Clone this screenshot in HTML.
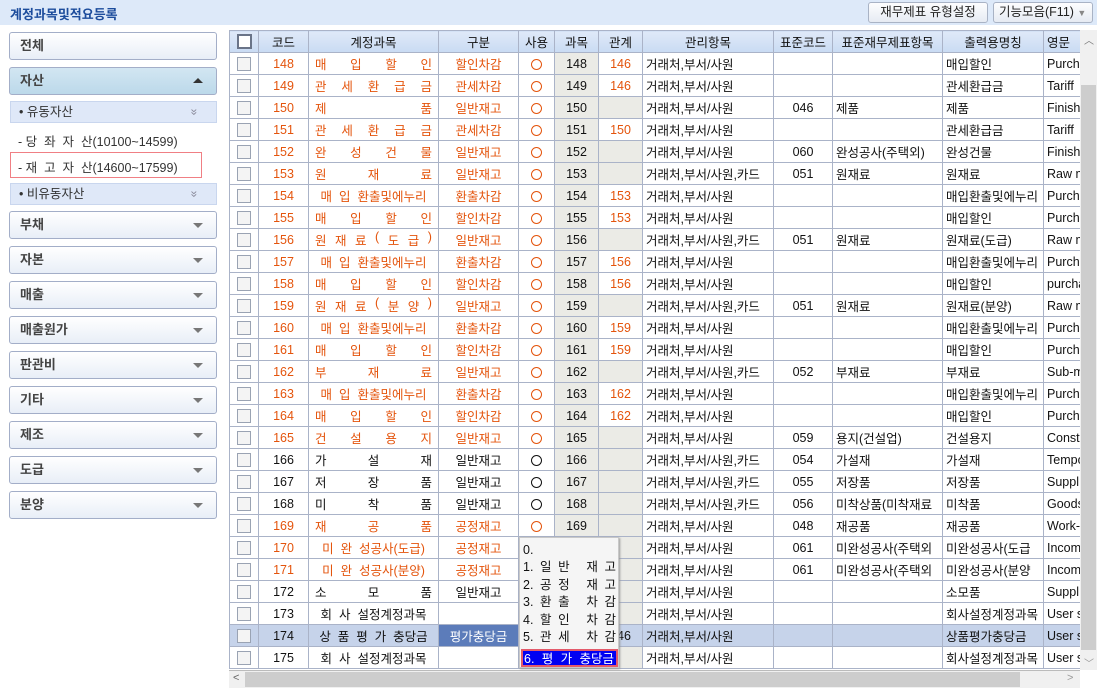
<!DOCTYPE html>
<html><head><meta charset="utf-8">
<style>
*{box-sizing:border-box;margin:0;padding:0}
body{width:1097px;height:693px;background:#fff;font-family:"Liberation Sans","Noto Sans CJK KR",sans-serif;font-size:12px;color:#111;position:relative;overflow:hidden}
.top{position:absolute;left:0;top:0;width:1097px;height:25px;background:#dde9f9}
.title{position:absolute;left:10px;top:4px;font-size:13px;font-weight:bold;color:#1c4c9c}
.tbtn{position:absolute;top:2px;height:21px;border:1px solid #a9b3c5;border-radius:3px;background:linear-gradient(#fdfdfe,#e6ebf3);font-size:12.5px;line-height:19px;text-align:center;color:#222}
.sb{position:absolute;left:9px;width:208px;height:28px;border:1px solid #a3aec8;border-radius:3px;background:linear-gradient(#fff,#e8eef7);font-weight:bold;font-size:13px;color:#444;padding-left:10px;line-height:26px}
.sb .ar{position:absolute;right:13px;top:11px;width:0;height:0;border-left:5px solid transparent;border-right:5px solid transparent;border-top:5px solid #777}
.sub{position:absolute;left:10px;width:207px;height:22px;background:#dfe8f8;border:1px solid #c9d6ee;color:#333;padding-left:8px;line-height:20px;font-size:12.5px}
.sub .dd{position:absolute;right:18px;top:0;color:#889;font-size:12px;transform:rotate(90deg)}
.lf{position:absolute;left:18px;font-size:12.5px;color:#333}
table{position:absolute;left:229px;top:30px;border-collapse:collapse;table-layout:fixed;width:851px}
td,th{border:1px solid #aab3c8;height:22px;padding:0 3px;white-space:nowrap;overflow:hidden;font-weight:normal;font-size:12.5px}
th{background:linear-gradient(#dfe9f8,#c9dbf3);text-align:center;color:#111}
td{text-align:center}
td.l{text-align:left}
.o td.c,.o td.n,.o td.g{color:#e4540c}
td.g{background:#ebebe6}
td.n{padding:0 6px}
.j{display:flex;justify-content:space-between}
.cb{display:inline-block;width:14px;height:14px;border:1px solid #9aa3b3;background:#f4f4f4;vertical-align:middle}
.hcb{display:inline-block;width:15px;height:15px;border:2px solid #6a7488;background:#fff;vertical-align:middle}
.ci{display:inline-block;width:11px;height:11px;border:1px solid #111;border-radius:50%;vertical-align:middle}
.o .ci{border-color:#e4540c}
tr.sel td{background:#c6d3ea}
tr.sel td.gb{background:#5c7cba;color:#fff}
.vs{position:absolute;left:1080px;top:30px;width:17px;height:640px;background:#f0f0f0}
.hs{position:absolute;left:229px;top:670px;width:851px;height:18px;background:#f0f0f0;border-top:1px solid #bbb}
.menu{position:absolute;left:519px;top:537px;width:100px;height:131px;background:#f5f5f5;border:1px solid #c8c8c8;box-shadow:1px 1px 2px #999;font-size:12.5px;padding-left:3px}
.mi{height:17.4px;line-height:17px;display:flex;justify-content:space-between;padding-right:2px}
.mi.h{background:#0000f2;color:#fff;border:2px solid #e35a6a;margin-left:-2px;margin-top:3px;padding-left:1px}
</style></head><body>
<div class="top"><div class="title">계정과목및적요등록</div>
<div class="tbtn" style="left:868px;width:120px">재무제표 유형설정</div>
<div class="tbtn" style="left:993px;width:100px;text-align:left;padding-left:5px">기능모음(F11) <span style="color:#888;font-size:9px">▼</span></div></div>

<div class="sb" style="top:32px">전체</div>
<div class="sb" style="top:67px;background:linear-gradient(#d2e6f2,#bcd9ea)">자산<span class="ar" style="border-top:0;border-bottom:5px solid #333;top:10px"></span></div>
<div class="sub" style="top:101px">• 유동자산<span class="dd">»</span></div>
<div class="lf" style="top:131px">- 당 &nbsp;좌 &nbsp;자 &nbsp;산(10100~14599)</div>
<div style="position:absolute;left:10px;top:152px;width:192px;height:26px;border:1px solid #f07f84"></div>
<div class="lf" style="top:157px">- 재 &nbsp;고 &nbsp;자 &nbsp;산(14600~17599)</div>
<div class="sub" style="top:183px">• 비유동자산<span class="dd">»</span></div>
<div class="sb" style="top:211px">부채<span class="ar"></span></div>
<div class="sb" style="top:246px">자본<span class="ar"></span></div>
<div class="sb" style="top:281px">매출<span class="ar"></span></div>
<div class="sb" style="top:316px">매출원가<span class="ar"></span></div>
<div class="sb" style="top:351px">판관비<span class="ar"></span></div>
<div class="sb" style="top:386px">기타<span class="ar"></span></div>
<div class="sb" style="top:421px">제조<span class="ar"></span></div>
<div class="sb" style="top:456px">도급<span class="ar"></span></div>
<div class="sb" style="top:491px">분양<span class="ar"></span></div>

<table>
<colgroup><col style="width:29px"><col style="width:50px"><col style="width:130px"><col style="width:80px"><col style="width:36px"><col style="width:44px"><col style="width:44px"><col style="width:131px"><col style="width:59px"><col style="width:110px"><col style="width:101px"><col style="width:37px"></colgroup>
<tr><th><span class="hcb"></span></th><th>코드</th><th>계정과목</th><th>구분</th><th>사용</th><th>과목</th><th>관계</th><th>관리항목</th><th>표준코드</th><th>표준재무제표항목</th><th>출력용명칭</th><th style="text-align:left">영문</th></tr>
<tr class="o"><td><span class="cb"></span></td><td class="c">148</td><td class="n"><div class="j"><span>매</span><span>입</span><span>할</span><span>인</span></div></td><td class="c">할인차감</td><td><span class="ci"></span></td><td class="g" style="color:#111">148</td><td class="c">146</td><td class="l">거래처,부서/사원</td><td></td><td></td><td class="l">매입할인</td><td class="l">Purchase</td></tr>
<tr class="o"><td><span class="cb"></span></td><td class="c">149</td><td class="n"><div class="j"><span>관</span><span>세</span><span>환</span><span>급</span><span>금</span></div></td><td class="c">관세차감</td><td><span class="ci"></span></td><td class="g" style="color:#111">149</td><td class="c">146</td><td class="l">거래처,부서/사원</td><td></td><td></td><td class="l">관세환급금</td><td class="l">Tariff</td></tr>
<tr class="o"><td><span class="cb"></span></td><td class="c">150</td><td class="n"><div class="j"><span>제</span><span>품</span></div></td><td class="c">일반재고</td><td><span class="ci"></span></td><td class="g" style="color:#111">150</td><td class="g"></td><td class="l">거래처,부서/사원</td><td>046</td><td class="l">제품</td><td class="l">제품</td><td class="l">Finish</td></tr>
<tr class="o"><td><span class="cb"></span></td><td class="c">151</td><td class="n"><div class="j"><span>관</span><span>세</span><span>환</span><span>급</span><span>금</span></div></td><td class="c">관세차감</td><td><span class="ci"></span></td><td class="g" style="color:#111">151</td><td class="c">150</td><td class="l">거래처,부서/사원</td><td></td><td></td><td class="l">관세환급금</td><td class="l">Tariff</td></tr>
<tr class="o"><td><span class="cb"></span></td><td class="c">152</td><td class="n"><div class="j"><span>완</span><span>성</span><span>건</span><span>물</span></div></td><td class="c">일반재고</td><td><span class="ci"></span></td><td class="g" style="color:#111">152</td><td class="g"></td><td class="l">거래처,부서/사원</td><td>060</td><td class="l">완성공사(주택외)</td><td class="l">완성건물</td><td class="l">Finish</td></tr>
<tr class="o"><td><span class="cb"></span></td><td class="c">153</td><td class="n"><div class="j"><span>원</span><span>재</span><span>료</span></div></td><td class="c">일반재고</td><td><span class="ci"></span></td><td class="g" style="color:#111">153</td><td class="g"></td><td class="l">거래처,부서/사원,카드</td><td>051</td><td class="l">원재료</td><td class="l">원재료</td><td class="l">Raw ma</td></tr>
<tr class="o"><td><span class="cb"></span></td><td class="c">154</td><td class="n">매 &nbsp;입 &nbsp;환출및에누리</td><td class="c">환출차감</td><td><span class="ci"></span></td><td class="g" style="color:#111">154</td><td class="c">153</td><td class="l">거래처,부서/사원</td><td></td><td></td><td class="l">매입환출및에누리</td><td class="l">Purchase</td></tr>
<tr class="o"><td><span class="cb"></span></td><td class="c">155</td><td class="n"><div class="j"><span>매</span><span>입</span><span>할</span><span>인</span></div></td><td class="c">할인차감</td><td><span class="ci"></span></td><td class="g" style="color:#111">155</td><td class="c">153</td><td class="l">거래처,부서/사원</td><td></td><td></td><td class="l">매입할인</td><td class="l">Purchase</td></tr>
<tr class="o"><td><span class="cb"></span></td><td class="c">156</td><td class="n"><div class="j"><span>원</span><span>재</span><span>료</span><span>(</span><span>도</span><span>급</span><span>)</span></div></td><td class="c">일반재고</td><td><span class="ci"></span></td><td class="g" style="color:#111">156</td><td class="g"></td><td class="l">거래처,부서/사원,카드</td><td>051</td><td class="l">원재료</td><td class="l">원재료(도급)</td><td class="l">Raw ma</td></tr>
<tr class="o"><td><span class="cb"></span></td><td class="c">157</td><td class="n">매 &nbsp;입 &nbsp;환출및에누리</td><td class="c">환출차감</td><td><span class="ci"></span></td><td class="g" style="color:#111">157</td><td class="c">156</td><td class="l">거래처,부서/사원</td><td></td><td></td><td class="l">매입환출및에누리</td><td class="l">Purchase</td></tr>
<tr class="o"><td><span class="cb"></span></td><td class="c">158</td><td class="n"><div class="j"><span>매</span><span>입</span><span>할</span><span>인</span></div></td><td class="c">할인차감</td><td><span class="ci"></span></td><td class="g" style="color:#111">158</td><td class="c">156</td><td class="l">거래처,부서/사원</td><td></td><td></td><td class="l">매입할인</td><td class="l">purchase</td></tr>
<tr class="o"><td><span class="cb"></span></td><td class="c">159</td><td class="n"><div class="j"><span>원</span><span>재</span><span>료</span><span>(</span><span>분</span><span>양</span><span>)</span></div></td><td class="c">일반재고</td><td><span class="ci"></span></td><td class="g" style="color:#111">159</td><td class="g"></td><td class="l">거래처,부서/사원,카드</td><td>051</td><td class="l">원재료</td><td class="l">원재료(분양)</td><td class="l">Raw ma</td></tr>
<tr class="o"><td><span class="cb"></span></td><td class="c">160</td><td class="n">매 &nbsp;입 &nbsp;환출및에누리</td><td class="c">환출차감</td><td><span class="ci"></span></td><td class="g" style="color:#111">160</td><td class="c">159</td><td class="l">거래처,부서/사원</td><td></td><td></td><td class="l">매입환출및에누리</td><td class="l">Purchase</td></tr>
<tr class="o"><td><span class="cb"></span></td><td class="c">161</td><td class="n"><div class="j"><span>매</span><span>입</span><span>할</span><span>인</span></div></td><td class="c">할인차감</td><td><span class="ci"></span></td><td class="g" style="color:#111">161</td><td class="c">159</td><td class="l">거래처,부서/사원</td><td></td><td></td><td class="l">매입할인</td><td class="l">Purchase</td></tr>
<tr class="o"><td><span class="cb"></span></td><td class="c">162</td><td class="n"><div class="j"><span>부</span><span>재</span><span>료</span></div></td><td class="c">일반재고</td><td><span class="ci"></span></td><td class="g" style="color:#111">162</td><td class="g"></td><td class="l">거래처,부서/사원,카드</td><td>052</td><td class="l">부재료</td><td class="l">부재료</td><td class="l">Sub-ma</td></tr>
<tr class="o"><td><span class="cb"></span></td><td class="c">163</td><td class="n">매 &nbsp;입 &nbsp;환출및에누리</td><td class="c">환출차감</td><td><span class="ci"></span></td><td class="g" style="color:#111">163</td><td class="c">162</td><td class="l">거래처,부서/사원</td><td></td><td></td><td class="l">매입환출및에누리</td><td class="l">Purchase</td></tr>
<tr class="o"><td><span class="cb"></span></td><td class="c">164</td><td class="n"><div class="j"><span>매</span><span>입</span><span>할</span><span>인</span></div></td><td class="c">할인차감</td><td><span class="ci"></span></td><td class="g" style="color:#111">164</td><td class="c">162</td><td class="l">거래처,부서/사원</td><td></td><td></td><td class="l">매입할인</td><td class="l">Purchase</td></tr>
<tr class="o"><td><span class="cb"></span></td><td class="c">165</td><td class="n"><div class="j"><span>건</span><span>설</span><span>용</span><span>지</span></div></td><td class="c">일반재고</td><td><span class="ci"></span></td><td class="g" style="color:#111">165</td><td class="g"></td><td class="l">거래처,부서/사원</td><td>059</td><td class="l">용지(건설업)</td><td class="l">건설용지</td><td class="l">Const</td></tr>
<tr><td><span class="cb"></span></td><td>166</td><td class="n"><div class="j"><span>가</span><span>설</span><span>재</span></div></td><td>일반재고</td><td><span class="ci"></span></td><td class="g">166</td><td class="g"></td><td class="l">거래처,부서/사원,카드</td><td>054</td><td class="l">가설재</td><td class="l">가설재</td><td class="l">Tempo</td></tr>
<tr><td><span class="cb"></span></td><td>167</td><td class="n"><div class="j"><span>저</span><span>장</span><span>품</span></div></td><td>일반재고</td><td><span class="ci"></span></td><td class="g">167</td><td class="g"></td><td class="l">거래처,부서/사원,카드</td><td>055</td><td class="l">저장품</td><td class="l">저장품</td><td class="l">Suppl</td></tr>
<tr><td><span class="cb"></span></td><td>168</td><td class="n"><div class="j"><span>미</span><span>착</span><span>품</span></div></td><td>일반재고</td><td><span class="ci"></span></td><td class="g">168</td><td class="g"></td><td class="l">거래처,부서/사원,카드</td><td>056</td><td class="l">미착상품(미착재료</td><td class="l">미착품</td><td class="l">Goods</td></tr>
<tr class="o"><td><span class="cb"></span></td><td class="c">169</td><td class="n"><div class="j"><span>재</span><span>공</span><span>품</span></div></td><td class="c">공정재고</td><td><span class="ci"></span></td><td class="g" style="color:#111">169</td><td class="g"></td><td class="l">거래처,부서/사원</td><td>048</td><td class="l">재공품</td><td class="l">재공품</td><td class="l">Work-</td></tr>
<tr class="o"><td><span class="cb"></span></td><td class="c">170</td><td class="n">미 &nbsp;완 &nbsp;성공사(도급)</td><td class="c">공정재고</td><td><span class="ci"></span></td><td class="g" style="color:#111">170</td><td class="g"></td><td class="l">거래처,부서/사원</td><td>061</td><td class="l">미완성공사(주택외</td><td class="l">미완성공사(도급</td><td class="l">Incom</td></tr>
<tr class="o"><td><span class="cb"></span></td><td class="c">171</td><td class="n">미 &nbsp;완 &nbsp;성공사(분양)</td><td class="c">공정재고</td><td><span class="ci"></span></td><td class="g" style="color:#111">171</td><td class="g"></td><td class="l">거래처,부서/사원</td><td>061</td><td class="l">미완성공사(주택외</td><td class="l">미완성공사(분양</td><td class="l">Incom</td></tr>
<tr><td><span class="cb"></span></td><td>172</td><td class="n"><div class="j"><span>소</span><span>모</span><span>품</span></div></td><td>일반재고</td><td><span class="ci"></span></td><td class="g">172</td><td class="g"></td><td class="l">거래처,부서/사원</td><td></td><td></td><td class="l">소모품</td><td class="l">Suppl</td></tr>
<tr><td><span class="cb"></span></td><td>173</td><td class="n">회 &nbsp;사 &nbsp;설정계정과목</td><td></td><td></td><td class="g">173</td><td class="g"></td><td class="l">거래처,부서/사원</td><td></td><td></td><td class="l">회사설정계정과목</td><td class="l">User s</td></tr>
<tr class="sel"><td><span class="cb"></span></td><td>174</td><td class="n">상 &nbsp;품 &nbsp;평 &nbsp;가 &nbsp;충당금</td><td class="gb">평가충당금</td><td></td><td>174</td><td>146</td><td class="l">거래처,부서/사원</td><td></td><td></td><td class="l">상품평가충당금</td><td class="l">User s</td></tr>
<tr><td><span class="cb"></span></td><td>175</td><td class="n">회 &nbsp;사 &nbsp;설정계정과목</td><td></td><td></td><td class="g">175</td><td class="g"></td><td class="l">거래처,부서/사원</td><td></td><td></td><td class="l">회사설정계정과목</td><td class="l">User s</td></tr>
</table>

<div class="vs"><div style="position:absolute;left:4px;top:2px;color:#777;font-size:10px">︿</div><div style="position:absolute;left:1px;top:55px;width:15px;height:565px;background:#cdcdcd"></div><div style="position:absolute;left:4px;top:625px;color:#999;font-size:10px">﹀</div></div>
<div class="hs"><div style="position:absolute;left:4px;top:1px;color:#666;font-size:11px">&lt;</div><div style="position:absolute;left:16px;top:1px;width:775px;height:15px;background:#cdcdcd"></div><div style="position:absolute;left:838px;top:1px;color:#999;font-size:11px">&gt;</div></div>

<div class="menu">
<div class="mi" style="margin-top:4px"><span>0.</span></div>
<div class="mi"><span>1.</span><span>일</span><span>반</span><span>&nbsp;</span><span>재</span><span>고</span></div>
<div class="mi"><span>2.</span><span>공</span><span>정</span><span>&nbsp;</span><span>재</span><span>고</span></div>
<div class="mi"><span>3.</span><span>환</span><span>출</span><span>&nbsp;</span><span>차</span><span>감</span></div>
<div class="mi"><span>4.</span><span>할</span><span>인</span><span>&nbsp;</span><span>차</span><span>감</span></div>
<div class="mi"><span>5.</span><span>관</span><span>세</span><span>&nbsp;</span><span>차</span><span>감</span></div>
<div class="mi h"><span>6.</span><span>평</span><span>가</span><span>충당금</span></div>
</div>
</body></html>
